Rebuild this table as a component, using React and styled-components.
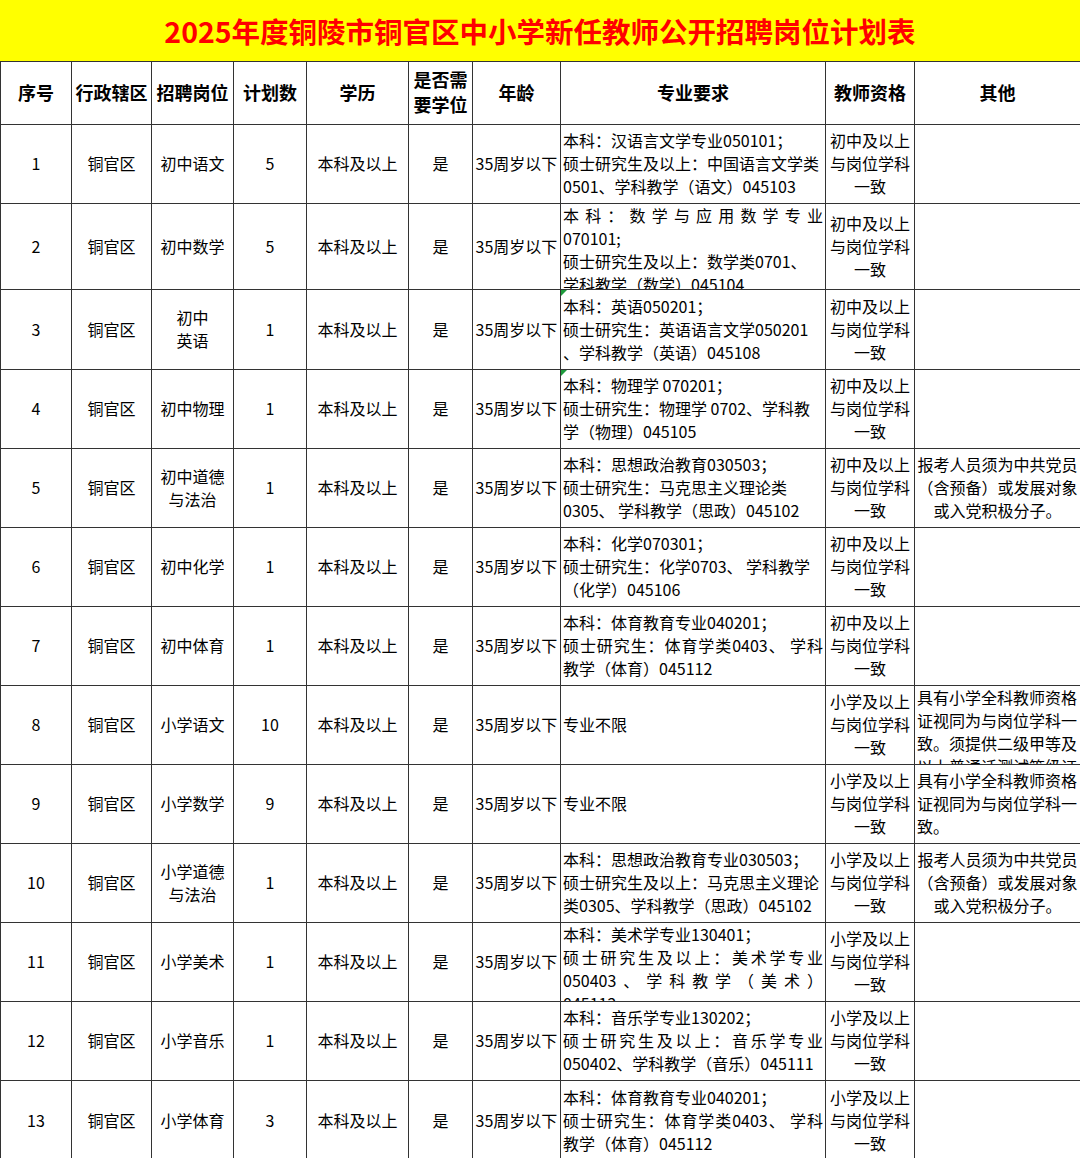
import React from "react";
import styled, { createGlobalStyle } from "styled-components";

const GlobalStyle = createGlobalStyle`
  html, body {
    margin: 0;
    padding: 0;
    background: #fff;
  }
  body {
    font-family: "Noto Sans CJK SC", "Noto Sans", sans-serif;
    color: #000;
  }
`;

const Sheet = styled.div`
  width: 1080px;
`;

const TitleBar = styled.h1`
  margin: 0;
  height: 61px;
  background: #ffff00;
  color: #ff0000;
  font-size: 28.5px;
  font-weight: 700;
  display: flex;
  align-items: center;
  justify-content: center;
`;

const Table = styled.table`
  width: 1080px;
  table-layout: fixed;
  border-collapse: collapse;
`;

const HeadCell = styled.th`
  border: 1px solid #333;
  padding: 0 0 2px;
  height: 60px;
  font-size: 18px;
  font-weight: 700;
  line-height: 25px;
  text-align: center;
  vertical-align: middle;
`;

const Cell = styled.td`
  border: 1px solid #333;
  padding: 0;
  vertical-align: top;
`;

const Inner = styled.div`
  position: relative;
  box-sizing: border-box;
  height: ${p => p.$h}px;
  display: flex;
  flex-direction: column;
  justify-content: safe center;
  overflow: hidden;
  padding: 0 ${p => p.$pad || 0}px 1px;
  font-size: 16px;
  line-height: 23px;
  text-align: ${p => p.$align || "center"};
`;

const Line = styled.div`
  ${p => p.$j && "text-align: justify; text-align-last: justify;"}
`;

const Flag = styled.span`
  position: absolute;
  top: 0;
  left: 0;
  width: 0;
  height: 0;
  border-top: 6px solid #1e9b3c;
  border-right: 6px solid transparent;
`;

const cols = [71, 80, 82, 73, 102, 64, 88, 265, 89, 166];

const J = t => ({ t, j: true });

const party = ["报考人员须为中共党员", "（含预备）或发展对象", "或入党积极分子。"];

const rows = [
  {
    h: 79, post: ["初中语文"], count: 5, level: "初中",
    major: ["本科：汉语言文学专业050101；", "硕士研究生及以上：中国语言文学类", "0501、学科教学（语文）045103"],
  },
  {
    h: 86, post: ["初中数学"], count: 5, level: "初中",
    major: [J("本科：数学与应用数学专业"), "070101;", "硕士研究生及以上：数学类0701、", "学科教学（数学）045104"],
  },
  {
    h: 80, post: ["初中", "英语"], count: 1, level: "初中", flag: true,
    major: ["本科：英语050201；", "硕士研究生：英语语言文学050201", "、学科教学（英语）045108"],
  },
  {
    h: 79, post: ["初中物理"], count: 1, level: "初中", flag: true,
    major: ["本科：物理学 070201；", "硕士研究生：物理学 0702、学科教", "学（物理）045105"],
  },
  {
    h: 79, post: ["初中道德", "与法治"], count: 1, level: "初中", party: true,
    major: ["本科：思想政治教育030503；", "硕士研究生：马克思主义理论类", "0305、 学科教学（思政）045102"],
  },
  {
    h: 79, post: ["初中化学"], count: 1, level: "初中",
    major: ["本科：化学070301；", "硕士研究生：化学0703、 学科教学", "（化学）045106"],
  },
  {
    h: 79, post: ["初中体育"], count: 1, level: "初中",
    major: ["本科：体育教育专业040201；", J("硕士研究生：体育学类0403、 学科"), "教学（体育）045112"],
  },
  {
    h: 79, post: ["小学语文"], count: 10, level: "小学",
    major: ["专业不限"],
    note: "具有小学全科教师资格证视同为与岗位学科一致。须提供二级甲等及以上普通话测试等级证书。",
  },
  {
    h: 79, post: ["小学数学"], count: 9, level: "小学",
    major: ["专业不限"],
    note: "具有小学全科教师资格证视同为与岗位学科一致。",
  },
  {
    h: 79, post: ["小学道德", "与法治"], count: 1, level: "小学", party: true,
    major: ["本科：思想政治教育专业030503；", "硕士研究生及以上：马克思主义理论", "类0305、学科教学（思政）045102"],
  },
  {
    h: 79, post: ["小学美术"], count: 1, level: "小学",
    major: ["本科：美术学专业130401；", J("硕士研究生及以上：美术学专业"), J("050403、学科教学（美术）"), "045112"],
  },
  {
    h: 79, post: ["小学音乐"], count: 1, level: "小学",
    major: ["本科：音乐学专业130202；", J("硕士研究生及以上：音乐学专业"), "050402、学科教学（音乐）045111"],
  },
  {
    h: 80, post: ["小学体育"], count: 3, level: "小学",
    major: ["本科：体育教育专业040201；", J("硕士研究生：体育学类0403、 学科"), "教学（体育）045112"],
  },
];

const Lines = ({ items }) =>
  items.map((l, i) =>
    typeof l === "string" ? <Line key={i}>{l}</Line> : <Line key={i} $j>{l.t}</Line>
  );

const App = () => (
  <>
    <GlobalStyle />
    <Sheet>
      <TitleBar>2025年度铜陵市铜官区中小学新任教师公开招聘岗位计划表</TitleBar>
      <Table>
        <colgroup>
          {cols.map((w, i) => (
            <col key={i} style={{ width: w }} />
          ))}
        </colgroup>
        <thead>
          <tr>
            <HeadCell>序号</HeadCell>
            <HeadCell>行政辖区</HeadCell>
            <HeadCell>招聘岗位</HeadCell>
            <HeadCell>计划数</HeadCell>
            <HeadCell>学历</HeadCell>
            <HeadCell>是否需<br />要学位</HeadCell>
            <HeadCell>年龄</HeadCell>
            <HeadCell>专业要求</HeadCell>
            <HeadCell>教师资格</HeadCell>
            <HeadCell>其他</HeadCell>
          </tr>
        </thead>
        <tbody>
          {rows.map((r, i) => {
            const h = r.h - 1;
            return (
              <tr key={i}>
                <Cell><Inner $h={h}>{i + 1}</Inner></Cell>
                <Cell><Inner $h={h}>铜官区</Inner></Cell>
                <Cell><Inner $h={h}><Lines items={r.post} /></Inner></Cell>
                <Cell><Inner $h={h}>{r.count}</Inner></Cell>
                <Cell><Inner $h={h}>本科及以上</Inner></Cell>
                <Cell><Inner $h={h}>是</Inner></Cell>
                <Cell><Inner $h={h}>35周岁以下</Inner></Cell>
                <Cell>
                  <Inner $h={h} $align="left" $pad={2}>
                    {r.flag && <Flag />}
                    <Lines items={r.major} />
                  </Inner>
                </Cell>
                <Cell>
                  <Inner $h={h}>
                    <Lines items={[`${r.level}及以上`, "与岗位学科", "一致"]} />
                  </Inner>
                </Cell>
                <Cell>
                  {r.party ? (
                    <Inner $h={h}><Lines items={party} /></Inner>
                  ) : (
                    <Inner $h={h} $align="left" $pad={2}>{r.note}</Inner>
                  )}
                </Cell>
              </tr>
            );
          })}
        </tbody>
      </Table>
    </Sheet>
  </>
);

export default App;
